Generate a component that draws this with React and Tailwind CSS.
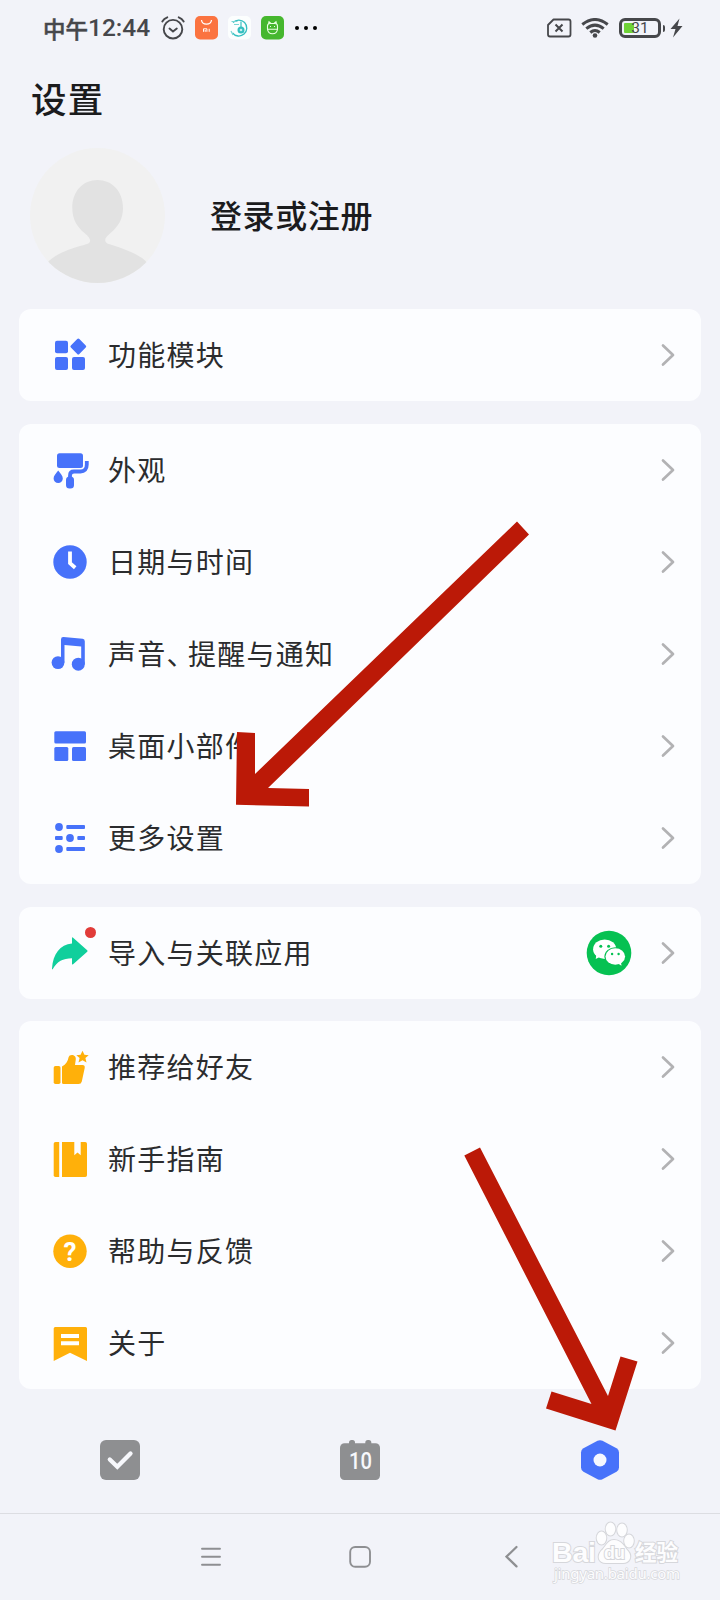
const BLUE = "#4772fa";
const YELLOW = "#ffb00a";

// ===== Row icons (40x40) =====
const icons = {
  modules: (
    <g fill={BLUE}>
      <rect x="5" y="5.7" width="13" height="12.6" rx="2" />
      <rect x="5" y="22" width="13" height="13" rx="2" />
      <rect x="22" y="22" width="13" height="13" rx="2" />
      <rect x="22.3" y="5.5" width="12" height="12" rx="1.5" transform="rotate(45 28.3 11.5)" />
    </g>
  ),
  roller: (
    <g fill={BLUE}>
      <rect x="7" y="3.3" width="26" height="14.8" rx="2.5" />
      <path d="M36.8 11v3.5c0 4.5-2.3 7-6.3 7H24c-2.5 0-4 1.3-4 4V29" fill="none" stroke={BLUE} strokeWidth="3.8" />
      <rect x="16" y="26.5" width="8" height="12" rx="3.5" />
      <path d="M8.2 20.5c2.5 3.2 4.6 5.4 4.6 8a4.6 4.6 0 0 1-9.2 0c0-2.6 2.1-4.8 4.600-8z" />
    </g>
  ),
  clock: (
    <g>
      <circle cx="20" cy="20" r="16.7" fill={BLUE} />
      <path d="M20 9.5v11.7l5.2 4.5" fill="none" stroke="#fff" strokeWidth="3.8" />
    </g>
  ),
  music: (
    <g fill={BLUE}>
      <circle cx="8" cy="28.6" r="6.4" />
      <circle cx="28.3" cy="30.2" r="6.5" />
      <path d="M11 28.5V5.5Q11 2.9 13.600 3.1L32.600 4.7Q34.8 4.9 34.8 7.2V30.2H31.2V12.5L14.5 10.9V28.5z" />
    </g>
  ),
  widgets: (
    <g fill={BLUE}>
      <rect x="4.3" y="5.2" width="31.7" height="12.2" rx="1.5" />
      <rect x="4.3" y="21" width="14" height="14" rx="1.5" />
      <rect x="22" y="21" width="14" height="14" rx="1.5" />
    </g>
  ),
  more: (
    <g fill={BLUE}>
      <circle cx="9" cy="9" r="3.9" />
      <rect x="16.3" y="7.1" width="18.7" height="3.8" rx="1" />
      <rect x="5" y="18.1" width="7.7" height="3.8" rx="1" />
      <circle cx="20" cy="20" r="3.9" />
      <rect x="27.3" y="18.1" width="7.7" height="3.8" rx="1" />
      <circle cx="9" cy="31" r="3.9" />
      <rect x="16.3" y="29.1" width="18.7" height="3.8" rx="1" />
    </g>
  ),
  share: (
    <path
      d="M22 5.2Q22 3.8 23.1 4.7L37.2 17.2Q38 18 37.2 18.8L23.1 31.2Q22 32.1 22 30.8V25.2C13 25.2 7 28.5 2.8 36Q2 37.2 2 35.5C3 21 10 11.500 22 10.500z"
      fill="#10cf9c"
    />
  ),
  thumb: (
    <g fill={YELLOW}>
      <rect x="3.7" y="19" width="6.8" height="18" rx="1.8" />
      <path d="M12 19.5C16 17.5 18 14 18.5 10.5C19 8.8 20.2 8 21.8 8C25 8 26.2 10.5 25.7 13L25 18H32.5Q35.2 18.2 34.7 21L31.8 34.5Q31.2 37 28.5 37H13.5Q12 37 12 35.5z" />
      <path d="M32.5 3.8l1.9 4 4.3.4-3.3 2.900 1.100 4.500-4-2.400-4 2.400 1.100-4.500-3.300-2.900 4.300-.4z" />
    </g>
  ),
  book: (
    <g fill={YELLOW}>
      <path d="M5.5 3H9.2V38H5.5Q3.7 38 3.7 36.2V4.8Q3.7 3 5.5 3z" />
      <path d="M12 3H24.3V16.2L27.5 13.6L30.7 16.2V3H35.2Q37 3 37 4.8V36.2Q37 38 35.2 38H12z" />
    </g>
  ),
  help: (
    <g>
      <circle cx="20" cy="20.3" r="16.7" fill={YELLOW} />
      <text x="20" y="29.500" textAnchor="middle" fill="#fff" fontSize="26" fontWeight="700" fontFamily="Roboto, sans-serif">
        ?
      </text>
    </g>
  ),
  about: (
    <g>
      <path d="M5.2 4H35.5Q37 4 37 5.5V38L20 29.8L3.7 38V5.5Q3.7 4 5.2 4z" fill={YELLOW} />
      <path d="M11 13H29M11 20.3H29" stroke="#fff" strokeWidth="4" />
    </g>
  )
};

const groups = [
  [{ icon: "modules", label: "功能模块" }],
  [
    { icon: "roller", label: "外观" },
    { icon: "clock", label: "日期与时间" },
    { icon: "music", label: "声音、提醒与通知" },
    { icon: "widgets", label: "桌面小部件" },
    { icon: "more", label: "更多设置" }
  ],
  [{ icon: "share", label: "导入与关联应用", dot: true, wechat: true }],
  [
    { icon: "thumb", label: "推荐给好友" },
    { icon: "book", label: "新手指南" },
    { icon: "help", label: "帮助与反馈" },
    { icon: "about", label: "关于" }
  ]
];

function StatusBar() {
  return (
    <div className="flex h-14 items-center justify-between pl-[43px] pr-[37px] text-[#46474b]">
      <div className="flex items-center">
        <div className="flex w-[118px] items-center whitespace-nowrap font-medium leading-none">
          <span className="text-[22.5px] [-webkit-text-stroke:0.5px_#46474b]">中午</span>
          <span className="font-['Roboto'] text-[24.5px]">12:44</span>
        </div>

        <svg width="24" height="24" viewBox="0 0 24 24" fill="none" stroke="currentColor" strokeWidth="1.9" strokeLinecap="round">
          <circle cx="12" cy="13.2" r="9.3" />
          <path d="M8.5 12.5l3.5 3 3.8-3M1.3 5.5Q3 2.5 6.3 1.300M22.700 5.5Q21 2.5 17.700 1.300" />
        </svg>

        <svg className="ml-[10px]" width="23" height="24" viewBox="0 0 23 24">
          <rect width="23" height="23.5" rx="5" fill="#fb7340" />
          <path d="M6.5 4c.5 5.5 9.5 5.5 10 0" fill="none" stroke="#fff" strokeWidth="1.2" />
          <path d="M8.5 15.8v-3h3.400v3M10.200 15.8v-1.800M14.200 12.800v3" fill="none" stroke="#fff" strokeWidth="1" />
        </svg>

        <svg className="ml-[10px]" width="23" height="24" viewBox="0 0 23 24">
          <rect width="23" height="23.5" rx="5" fill="#fcfefe" />
          <path d="M5 6.5A8 8 0 1 1 4.5 17" fill="none" stroke="#35bfc0" strokeWidth="1.3" />
          <path d="M3.500 5.5h6M6 8.500h5M3 15l2 4" stroke="#7ad5d4" strokeWidth="1.2" />
          <path d="M13 5.5v6" stroke="#35bfc0" strokeWidth="1.2" />
          <circle cx="13" cy="14" r="3.5" fill="#35bfc0" />
          <circle cx="13" cy="14" r="1.3" fill="#c5efee" />
        </svg>

        <svg className="ml-[10px]" width="23" height="24" viewBox="0 0 23 24">
          <rect width="23" height="23.5" rx="5" fill="#46b72f" />
          <g fill="none" stroke="#e9ffe2" strokeWidth="1.1">
            <path d="M6.5 13V10q0-2.5 2.5-2.5h5q2.5 0 2.5 2.5v3M7.5 8L8 5.800l2 1.700M15.500 8L15 5.800l-2 1.700M6 13.200h11M6.500 13.200q.5 4.500 5 4.500t5-4.500" />
            <path d="M9 10.5h1M13 10.5h1" />
          </g>
        </svg>

        <div className="ml-[11px] flex gap-[5px]">
          <i className="size-1 rounded-full bg-black" />
          <i className="size-1 rounded-full bg-black" />
          <i className="size-1 rounded-full bg-black" />
        </div>
      </div>

      <div className="flex items-center">
        <svg width="25" height="20" viewBox="0 0 25 20" fill="none" stroke="currentColor" strokeWidth="1.800">
          <path d="M6.5 1.500H21.500Q23.500 1.500 23.500 3.500V16.500Q23.500 18.500 21.500 18.500H3Q1 18.500 1 16.500V7z" strokeLinejoin="round" />
          <path d="M8.500 6.500l7 7M15.500 6.500l-7 7" strokeWidth="2" />
        </svg>

        <svg className="ml-[9px]" width="28" height="20" viewBox="0 0 28 20" fill="none" stroke="currentColor" strokeWidth="3">
          <path d="M1.3 6.500Q14-3.500 26.700 6.500" />
          <path d="M5.300 10.700Q14 3.500 22.700 10.700" />
          <path d="M9.300 14.500Q14 10.500 18.700 14.500" />
          <circle cx="14" cy="17.500" r="2.300" fill="currentColor" stroke="none" />
        </svg>

        <div className="relative ml-[10px] flex h-5 w-[42px] items-center justify-center rounded-[6px] border-[3px] border-[#46474b]">
          <div className="absolute left-[2px] top-[2px] h-[10px] w-[10px] rounded-[1px] bg-[#6fd237]" />
          <span className="relative top-px font-['Roboto'] text-[15.5px] leading-none">31</span>
        </div>
        <div className="ml-[2px] h-[7px] w-[2px] rounded-r bg-[#46474b]" />

        <svg className="ml-[5px]" width="13" height="20" viewBox="0 0 13 20">
          <path d="M9.5 0.500L.5 11h5L3 19.500 12.500 8H7.500z" fill="currentColor" />
        </svg>
      </div>
    </div>
  );
}

function Wechat() {
  return (
    <svg width="46" height="46" viewBox="0 0 46 46">
      <circle cx="23" cy="23" r="22.3" fill="#06c152" />
      <path d="M10.500 24l-.8 5 5-2.500z" fill="#fff" />
      <ellipse cx="18.700" cy="19.200" rx="11.600" ry="9.700" fill="#fff" />
      <ellipse cx="29.300" cy="26.500" rx="10.900" ry="9.300" fill="#06c152" />
      <ellipse cx="29.300" cy="26.500" rx="9.800" ry="8.200" fill="#fff" />
      <path d="M32 33.500l3.500 2.300-.6-4z" fill="#fff" />
      <g fill="#06c152">
        <circle cx="14.800" cy="16.200" r="1.500" />
        <circle cx="22.600" cy="16.200" r="1.500" />
        <circle cx="26.100" cy="24" r="1.200" />
        <circle cx="32.600" cy="24" r="1.200" />
      </g>
    </svg>
  );
}

function Row({ item }) {
  // the enumeration comma is set tighter than a full square
  const parts = item.label.split("、");

  return (
    <div className="flex h-[92px] items-center pl-[31px] pr-[26px]">
      <div className="relative size-10 shrink-0">
        <svg width="40" height="40" viewBox="0 0 40 40">{icons[item.icon]}</svg>
        {item.dot && (
          <i className="absolute -top-1.5 left-[34.5px] size-[11.5px] rounded-full bg-[#e13c39]" />
        )}
      </div>

      <span className="ml-[18px] whitespace-nowrap pb-[2px] text-[28px] leading-none tracking-[1.25px] text-[#2b2c2e]">
        {parts[0]}
        {parts[1] && <span className="tracking-[-6.5px]">、</span>}
        {parts[1]}
      </span>

      <div className="ml-auto flex items-center gap-[29px]">
        {item.wechat && <Wechat />}
        <svg width="14" height="24" viewBox="0 0 14 24" fill="none" stroke="#b2b2b4" strokeWidth="2.7" strokeLinecap="round" strokeLinejoin="round">
          <path d="M2 2.5L12 12 2 21.5" />
        </svg>
      </div>
    </div>
  );
}

function TabBar() {
  return (
    <div className="grid h-[123.6px] grid-cols-3 items-center justify-items-center pt-[18px]">
      <svg width="40" height="40" viewBox="0 0 40 40">
        <rect width="40" height="40" rx="6" fill="#8e8f91" />
        <path d="M9.8 19.5l7.5 7.2L30.5 13.5" fill="none" stroke="#f7f8fc" strokeWidth="4.3" strokeLinecap="round" />
      </svg>

      <svg width="40" height="40" viewBox="0 0 40 40">
        <rect y="3.3" width="40" height="36.7" rx="4.5" fill="#8e8f91" />
        <rect x="9" y="0" width="6" height="8" rx="2.5" fill="#8e8f91" />
        <rect x="25.3" y="0" width="6" height="8" rx="2.5" fill="#8e8f91" />
        <text x="20.5" y="29" textAnchor="middle" fill="#f7f8fc" fontSize="23.5" fontWeight="500" fontFamily="Roboto, sans-serif" textLength="23" lengthAdjust="spacingAndGlyphs">
          10
        </text>
      </svg>

      <svg width="40" height="40" viewBox="0 0 40 40">
        <path d="M17.5.8Q20-.5 22.5.8L36.5 8.3Q39 9.8 39 12.5V27.5Q39 30.2 36.5 31.7L22.5 39.2Q20 40.5 17.5 39.2L3.5 31.7Q1 30.2 1 27.5V12.5Q1 9.8 3.5 8.3z" fill={BLUE} />
        <circle cx="20" cy="20" r="6.5" fill="#f5f8ff" />
      </svg>
    </div>
  );
}

function SystemNav() {
  return (
    <div className="flex h-[87px] items-center border-t border-[#dcdde2] pl-[201px]">
      <svg width="20" height="22" viewBox="0 0 20 22" stroke="#8e8f92" strokeWidth="1.9" strokeLinecap="round">
        <path d="M1 2.7h18M1 10.7h18M1 18.7h18" />
      </svg>
      <svg className="ml-[128px]" width="22" height="22" viewBox="0 0 22 22" fill="none" stroke="#8e8f92" strokeWidth="1.9">
        <rect x="1.2" y="1" width="19.8" height="19.8" rx="5" />
      </svg>
      <svg className="ml-[134px]" width="13" height="24" viewBox="0 0 13 24" fill="none" stroke="#8e8f92" strokeWidth="2.2" strokeLinecap="round">
        <path d="M11.5 2L1.5 11.700l10 9.700" />
      </svg>
    </div>
  );
}

function Watermark() {
  return (
    <svg className="absolute bottom-0 right-0" width="180" height="86" viewBox="540 1514 180 86">
      <g fill="#fdfdfe" stroke="#d6d7db" strokeWidth="2" paintOrder="stroke">
        <text x="552" y="1562" fontSize="28.5" fontWeight="700" fontFamily="Liberation Sans, sans-serif" textLength="44">
          Bai
        </text>
        <ellipse cx="601.5" cy="1538" rx="4.8" ry="6.5" />
        <ellipse cx="610.5" cy="1529" rx="4.8" ry="6.5" />
        <ellipse cx="622" cy="1530" rx="4.8" ry="6.5" />
        <ellipse cx="629" cy="1541" rx="4.8" ry="6.5" />
        <path d="M614 1540C622 1540 624 1547 628 1551C633 1557 629 1563 623 1563H606C598 1563 597 1556 601 1551C606 1547 607 1540 614 1540z" />
        <text x="604" y="1559" fontSize="18" fontWeight="700" fontFamily="Liberation Sans, sans-serif" textLength="21">
          du
        </text>
        <text x="635" y="1560" fontSize="21.5" fontWeight="700" fontFamily="Noto Sans CJK SC, sans-serif">
          经验
        </text>
        <text x="554" y="1579" fontSize="15" fontFamily="Noto Sans, sans-serif" textLength="126" strokeWidth="1.4">
          jingyan.baidu.com
        </text>
      </g>
    </svg>
  );
}

export default function App() {
  return (
    <div className="relative flex h-[1600px] w-[720px] flex-col overflow-hidden bg-[#f2f3f9] font-['Noto_Sans_CJK_SC',sans-serif]">

      <StatusBar />

      <h1 className="flex h-[86px] items-center pb-[3px] pl-[31px] text-[35.5px] font-medium leading-none tracking-[1.2px] text-[#1b1b1d]">
        设置
      </h1>

      {/* ===== Account ===== */}
      <div className="flex h-[167.4px] items-start pl-[30px] pt-[6px]">
        <svg width="135" height="135" viewBox="0 0 135 135">
          <clipPath id="avatar">
            <circle cx="67.5" cy="67.5" r="67.5" />
          </clipPath>
          <g clipPath="url(#avatar)">
            <rect width="135" height="135" fill="#f1f1f1" />
            <path
              d="M67.5 32C82 32 93 43 93 60C93 71 88 79 80.5 85C76 89 74.5 91 75.5 93.5C76.2 95.5 79 96 82 97C98 102 112 108 117.5 115V135H17V115C24 107 38 101 54 97C57 96 59.5 95.5 60 93.5C60.5 91 59 89 54.5 85C47 79 42.3 71 42.3 60C42.3 43 53 32 67.5 32z"
              fill="#e2e2e2"
            />
          </g>
        </svg>
        <span className="ml-[45px] flex h-[135px] items-center pb-[3px] text-[32px] font-medium leading-none tracking-[0.6px] text-[#1b1b1d]">
          登录或注册
        </span>
      </div>

      {/* ===== Settings groups ===== */}
      <div className="flex flex-col gap-[22.67px] px-[19px]">
        {groups.map((items, i) => (
          <div key={i} className="rounded-[12px] bg-[#fcfdff]">
            {items.map((item) => (
              <Row key={item.label} item={item} />
            ))}
          </div>
        ))}
      </div>

      <TabBar />
      <SystemNav />
      <Watermark />

      {/* ===== Pointer arrows ===== */}
      <svg className="absolute inset-0" width="720" height="1600" viewBox="0 0 720 1600" fill="#bb1907">
        <path d="M517 521.5L529 534.5L268 788L309 789L309 806.5L236 804.7L237 732L255 733L255 774z" />
        <path d="M464.3 1155.5L480 1147.5L608 1396L620.5 1356.5L637.5 1361.5L615.5 1430.5L546 1408.5L551.5 1391.5L591.5 1404z" />
      </svg>
    </div>
  );
}
